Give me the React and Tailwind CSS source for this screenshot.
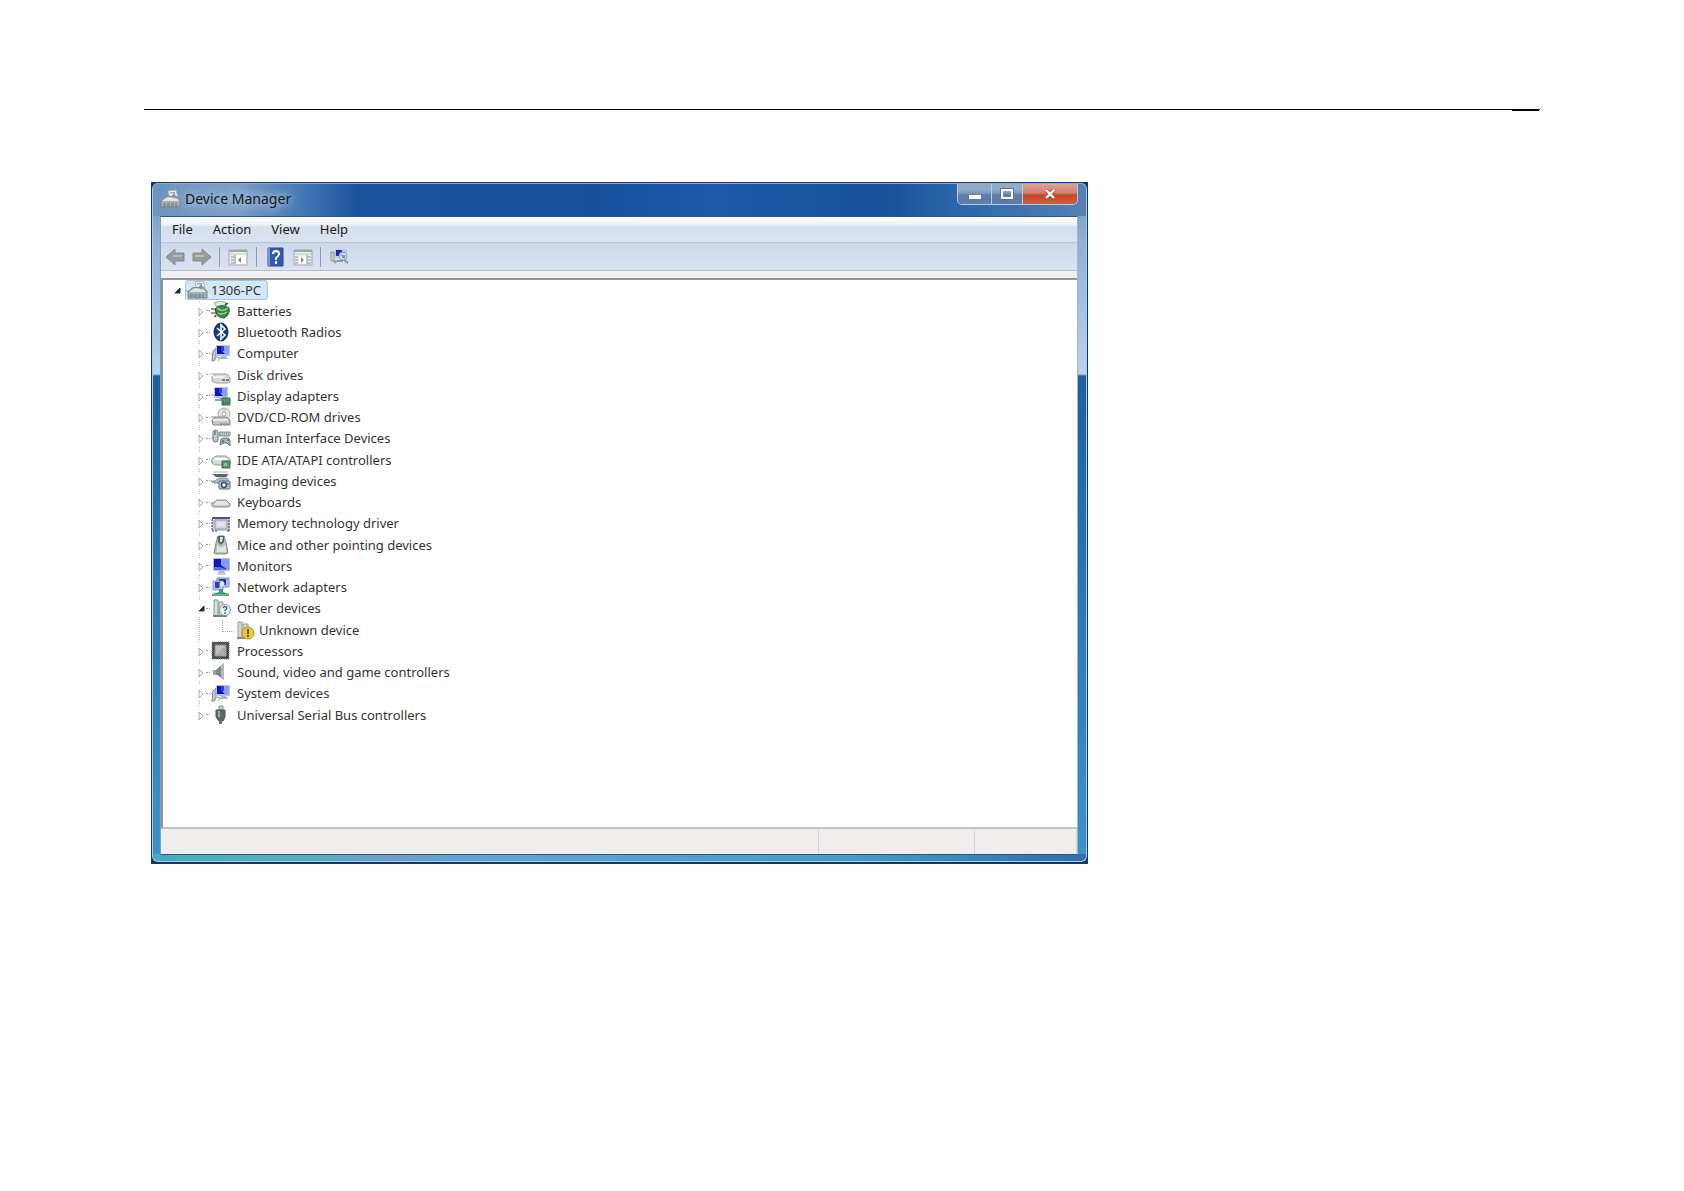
import React from "react";

function PcIcon() {
  return (
    <svg viewBox="0 0 22 20" className="h-5 w-[22px] shrink-0" aria-hidden="true">
      <path d="M9 2l8-1 2 7-8 2z" fill="#e9efef" stroke="#a9b6bb" />
      <path d="M11 4l5-.6M15 3l1 5" stroke="#8b989c" />
      <path d="M0 11h4" stroke="#7d8a90" />
      <path d="M6 8l11-1 4 4v7H2v-6z" fill="#a5b0b3" stroke="#78858a" />
      <path d="M6 10l3-2 9 2 2 2H3z" fill="#dfe7e7" />
      <path d="M12 8l3-4 2 5" fill="#7e9a94" />
      <path d="M4 15h14M4 17h14" stroke="#66747a" strokeDasharray="3 1" />
    </svg>
  );
}

function Monitor({ x = 5, y = 2 }) {
  return (
    <g transform={`translate(${x} ${y})`}>
      <path d="M0 0h14v11H0z" fill="#b4c3ee" />
      <path d="M1 1h10v8H1z" fill="#1016b8" />
      <path d="M6 1h7v8l-3 1-4-4z" fill="#8ba0f2" />
      <path d="M5 1h3v5H5z" fill="#2c3fd2" />
      <path d="M5 11h5l2 3H4z" fill="#aab4bd" />
    </g>
  );
}

function ComputerArt() {
  return (
    <>
      <path d="M0 11h4" stroke="#8d979c" />
      <path d="M2 8l3-3v10l-2 3H1z" fill="#c3cbcb" stroke="#7d8988" />
      <Monitor />
      <path d="M6 14l3 1-2 3" fill="none" stroke="#8e9aa6" />
    </>
  );
}

const ART = {
  battery: (
    <>
      <path d="M0 8h6M0 12h6" stroke="#6f7f75" strokeWidth="1.4" />
      <path d="M3 2l7-2 5 2v6l-6 1z" fill="#e7ede5" stroke="#8da08d" />
      <path d="M4 8c2-3 6-4 10-3l4 2c1 4-1 8-5 10-5 0-8-3-9-9z" fill="#3d8648" stroke="#235d31" />
      <path d="M6 7c3 3 7 3 11 0M7 12c3 2 6 1 9-1" fill="none" stroke="#9fd0a0" strokeWidth="1.4" />
      <path d="M14 4l3-2M5 14l-1 2" stroke="#376b40" strokeWidth="2" />
    </>
  ),
  bluetooth: (
    <>
      <ellipse cx="10" cy="10" rx="7" ry="9" fill="#123e7c" stroke="#0b2d5e" />
      <path d="M6 6l8 7-4 4V3l4 4-8 7" fill="none" stroke="#fff" strokeWidth="1.6" />
    </>
  ),
  computer: <ComputerArt />,
  disk: (
    <>
      <path d="M0 9h6" stroke="#a2a7a8" />
      <path d="M1 12l4-3h11l3 4v4l-2 1H5l-4-2z" fill="#d9dbdb" stroke="#9da1a2" />
      <path d="M2 12h12" stroke="#fafafa" strokeWidth="1.5" />
      <path d="M11 15h7" stroke="#77807a" strokeWidth="2" strokeDasharray="3 1" />
    </>
  ),
  display: (
    <>
      <path d="M0 9h5" stroke="#8d979c" />
      <Monitor x={3} y={1} />
      <path d="M4 14h15" stroke="#98a6b4" strokeWidth="2" />
      <path d="M11 12h8v7h-8z" fill="#5b9169" stroke="#3c6d5a" />
      <path d="M12 17h6" stroke="#31415b" strokeDasharray="1 1" />
    </>
  ),
  dvd: (
    <>
      <circle cx="13" cy="7" r="6" fill="#e5e6df" stroke="#aaaea9" />
      <circle cx="13" cy="7" r="2" fill="#fff" stroke="#a5aaa5" />
      <path d="M12 1l1 5 2-5z" fill="#c0c996" />
      <path d="M0 10h5" stroke="#8b8e8e" />
      <path d="M1 13l4-3h10l4 3v5H2z" fill="#c5c7c7" stroke="#818485" />
      <path d="M2 13h15" stroke="#f4f4f4" strokeWidth="1.5" />
      <path d="M9 17h8" stroke="#5c6261" strokeDasharray="2 1" />
    </>
  ),
  hid: (
    <>
      <path d="M0 10h3" stroke="#889195" />
      <rect x="2" y="2" width="5" height="12" rx="2.5" fill="#c1cccc" stroke="#6c777b" />
      <path d="M4 3v4" stroke="#515d61" />
      <path d="M8 4h11v4H8z" fill="#c5cdd1" stroke="#8b969b" />
      <path d="M9 5h9M9 7h9" stroke="#707b80" strokeDasharray="1 1" />
      <path d="M9 17l1-6 3-1h4l2 2v6l-3-3h-3z" fill="#abb6ba" stroke="#6c777d" />
      <path d="M12 12v3M16 12h2" stroke="#435158" />
    </>
  ),
  ide: (
    <>
      <path d="M0 11h3" stroke="#93999b" />
      <path d="M1 9l4-3h10l4 3v5l-2 1H4l-3-2z" fill="#d7dbd9" stroke="#8d9594" />
      <path d="M3 9h13" stroke="#fafafa" strokeWidth="2" />
      <path d="M11 11h8v7h-8z" fill="#5d9275" stroke="#3b6953" />
      <path d="M13 13h3v3h-3z" fill="#8abf9b" />
    </>
  ),
  imaging: (
    <>
      <path d="M1 3h17l-3 3H5z" fill="#5c666c" />
      <path d="M2 1h15" stroke="#aab2b6" />
      <path d="M0 10h4l4-3h8l2 3v2H3z" fill="#b7bec3" stroke="#848e95" />
      <rect x="8" y="10" width="11" height="8" rx="1" fill="#b8c3dc" stroke="#5e6989" />
      <circle cx="13" cy="14" r="2.5" fill="#fff" stroke="#3c486d" strokeWidth="1.5" />
      <path d="M17 12v2" stroke="#3c486d" />
    </>
  ),
  keyboard: (
    <>
      <path d="M0 11h3" stroke="#8b8f91" />
      <path d="M1 12l5-4h9l4 4v2l-2 1H3l-2-1z" fill="#c9cbcc" stroke="#85898a" />
      <path d="M5 10h11M4 12h13" stroke="#efefef" strokeWidth="1.4" />
    </>
  ),
  memory: (
    <>
      <path d="M1 5h18v13H1z" fill="#c3c9d3" />
      <path d="M1 5h18" stroke="#4c5668" strokeWidth="2" />
      <path d="M4 7h12v9H4z" fill="#d1d6df" stroke="#929dac" />
      <path d="M1 6v12M18 7v11M1 18h5M16 18h3" stroke="#3e4656" strokeDasharray="2 1" />
      <path d="M6 9h8v4H6z" fill="#e2e6eb" />
    </>
  ),
  mouse: (
    <>
      <path d="M7 1h6l2 7 2 10-3 1H6l-3-1 2-10z" fill="#bcc2c1" stroke="#7e8585" />
      <path d="M7 1h6v6l-3 3-3-3z" fill="#59615f" />
      <path d="M9 2h3l-1 5H9z" fill="#e0e5e4" />
      <path d="M6 10l4 3 5-3v7H6z" fill="#e3e7e5" />
    </>
  ),
  monitor: (
    <>
      <path d="M2 2h17v13H2z" fill="#aebcf0" />
      <path d="M3 3h13v10H3z" fill="#1318b8" />
      <path d="M10 3h8v11l-4-2-4-3z" fill="#8499f0" />
      <path d="M3 11l6 0 6 2v1H3z" fill="#5970e4" />
      <path d="M8 15h5l2 4H6z" fill="#b8bcc0" />
      <path d="M6 18h9" stroke="#dcdcdc" />
    </>
  ),
  network: (
    <>
      <path d="M6 1h12v9H6z" fill="#a9bce8" stroke="#8094c6" />
      <path d="M8 2h7v6H8z" fill="#1c2fae" />
      <path d="M2 4h10v9H2z" fill="#b7c8ed" stroke="#7c91c6" />
      <path d="M4 5h6l-2 6H4z" fill="#2641b9" />
      <circle cx="11" cy="7" r="2.5" fill="#dce8fa" />
      <path d="M8 12h4v3l6 2v2H1v-2l7-2z" fill="#3d9b78" />
      <path d="M2 18h15" stroke="#85c9a9" />
    </>
  ),
  other: (
    <>
      <path d="M3 2h4v16H3zM8 4h4v14H8z" fill="#d6dfd6" stroke="#8d9990" />
      <path d="M2 18h14" stroke="#74857a" strokeWidth="2" />
      <circle cx="14" cy="12" r="5.5" fill="#edf2f6" stroke="#8495a7" />
      <path d="M12 10q2-3 4 0q0 1-2 2v1M14 14v2" fill="none" stroke="#3b5a87" strokeWidth="1.3" />
    </>
  ),
  unknown: (
    <>
      <path d="M2 2h4v16H2zM7 4h5v14H7z" fill="#d6dbc9" stroke="#979d8c" />
      <path d="M1 18h8" stroke="#8a8f6e" strokeWidth="2" />
      <circle cx="12" cy="13" r="6" fill="#e9cb3a" stroke="#b8951f" />
      <path d="M12 9v5M12 15v2" stroke="#5d4a0c" strokeWidth="1.8" />
    </>
  ),
  cpu: (
    <>
      <path d="M1 1h17v17H1z" fill="#4a4d50" />
      <path d="M1 1h17v17H1z" fill="none" stroke="#777" strokeDasharray="1 1" />
      <path d="M4 4h11v11H4z" fill="#c0c2c1" stroke="#8b8d8d" />
      <path d="M5 14L14 5v9z" fill="#aaadac" />
    </>
  ),
  sound: (
    <>
      <path d="M2 8h4v5H2z" fill="#9a9fa3" />
      <path d="M5 8l8-7v17l-8-6z" fill="#80878c" />
      <path d="M10 4l3-3v17l-3-3z" fill="#b2b8bc" />
    </>
  ),
  usb: (
    <>
      <path d="M8 1h4v4H8z" fill="#c8cccd" stroke="#8d9394" />
      <path d="M5 5h9v7l-2 4H8l-3-4z" fill="#626869" stroke="#4d5354" />
      <path d="M7 6h2v6H7z" fill="#a1a6a6" />
      <path d="M8 15h3v4H8z" fill="#6b7172" />
    </>
  ),
};

function DeviceIcon({ kind }) {
  return (
    <svg viewBox="0 0 20 20" fill="none" className="size-5 shrink-0" aria-hidden="true">
      {ART[kind]}
    </svg>
  );
}

function Toggle({ open, label }) {
  return (
    <button type="button" aria-label={label} className="relative flex h-4 w-2 shrink-0 items-center bg-white">
      <svg viewBox="0 0 8 10" className="h-2.5 w-2" aria-hidden="true">
        {open ? (
          <path d="M7 3v5H2z" fill="#2d2d2d" stroke="#2d2d2d" />
        ) : (
          <path d="M2 2l4 4-4 4z" fill="#fff" stroke="#a9a9a9" />
        )}
      </svg>
    </button>
  );
}

const DEVICES = [
  ["battery", "Batteries"],
  ["bluetooth", "Bluetooth Radios"],
  ["computer", "Computer"],
  ["disk", "Disk drives"],
  ["display", "Display adapters"],
  ["dvd", "DVD/CD-ROM drives"],
  ["hid", "Human Interface Devices"],
  ["ide", "IDE ATA/ATAPI controllers"],
  ["imaging", "Imaging devices"],
  ["keyboard", "Keyboards"],
  ["memory", "Memory technology driver"],
  ["mouse", "Mice and other pointing devices"],
  ["monitor", "Monitors"],
  ["network", "Network adapters"],
  ["other", "Other devices", true],
  ["unknown", "Unknown device", false, true],
  ["cpu", "Processors"],
  ["sound", "Sound, video and game controllers"],
  ["computer", "System devices"],
  ["usb", "Universal Serial Bus controllers"],
];

function DeviceRow({ kind, label, open, child }) {
  if (child) {
    return (
      <li className="flex h-[21px] items-center pb-[2px] pl-[59px]">
        <span className="h-3 w-3 self-start border-b border-l border-dotted border-[#a5a5a5]" />
        <span className="ml-[2px] flex items-center gap-[3px]">
          <DeviceIcon kind={kind} />
          {label}
        </span>
      </li>
    );
  }
  return (
    <li className="flex h-[21px] items-center pb-[2px] pl-[34px]">
      <Toggle open={open} label={`Toggle ${label}`} />
      <span className="mx-px w-1 border-t border-dotted border-[#9a9a9a]" />
      <DeviceIcon kind={kind} />
      <span className="ml-[6px]">{label}</span>
    </li>
  );
}

function PanelIcon({ flip }) {
  return (
    <svg viewBox="0 0 20 18" className="h-[18px] w-5" aria-hidden="true">
      <path d="M1 2h18v15H1z" fill="#eceeed" stroke="#a3aaae" />
      <path d="M1 3h18" stroke="#9ba5aa" strokeWidth="2" />
      <path d="M2 6h16" stroke="#c6cccc" />
      {flip ? (
        <>
          <path d="M14 7v9M2 9h3M2 12h3M2 15h3M15 9h3M15 12h3M15 15h3" stroke="#8b9499" />
          <path d="M6 8h7v8H6z" fill="#fff" />
          <path d="M8 9l3 3-3 3z" fill="#86906f" />
        </>
      ) : (
        <>
          <path d="M7 7v9M3 9h3M3 12h3M3 15h3" stroke="#8b9499" />
          <path d="M8 7h10v9H8z" fill="#fff" />
          <path d="M13 9l-3 3 3 3z" fill="#7e8872" />
        </>
      )}
    </svg>
  );
}

function ArrowIcon({ right }) {
  return (
    <svg viewBox="0 0 20 18" className="h-[18px] w-5" aria-hidden="true">
      {right ? (
        <path d="M19 9l-9-8v4H1v8h9v4z" fill="#989b9f" stroke="#85898f" />
      ) : (
        <path d="M1 9l9-8v4h9v8h-9v4z" fill="#989b9f" stroke="#85898f" />
      )}
      <path d={right ? "M3 8h9" : "M8 8h9"} stroke="#b9bcbf" strokeWidth="2" />
    </svg>
  );
}

function Separator() {
  return <span className="h-5 w-px bg-[#8e98a8]" />;
}

function Toolbar() {
  return (
    <div className="flex h-7 items-center border-b border-[#b9c1cf] bg-linear-to-b from-[#cfd8ea] to-[#dbe2f1] pl-1">
      <div className="flex gap-[7px]">
        <button type="button" aria-label="Back"><ArrowIcon /></button>
        <button type="button" aria-label="Forward"><ArrowIcon right /></button>
      </div>
      <div className="ml-[7px] flex items-center gap-2">
        <Separator />
        <button type="button" aria-label="Show console tree"><PanelIcon /></button>
        <Separator />
      </div>
      <div className="ml-[10px] flex items-center gap-[9px]">
        <button type="button" aria-label="Help">
          <svg viewBox="0 0 17 20" className="h-5 w-[17px]" aria-hidden="true">
            <path d="M1 1h15v18H1z" fill="#3458b8" stroke="#2b4794" />
            <path d="M2 1v18" stroke="#7893da" strokeWidth="2" />
            <path d="M6 7q0-3 3-3t3 3q0 2-3 4v2M9 14v3" fill="none" stroke="#fff" strokeWidth="2" />
          </svg>
        </button>
        <button type="button" aria-label="Show action pane"><PanelIcon flip /></button>
      </div>
      <div className="ml-[7px] flex items-center gap-2">
        <Separator />
        <button type="button" aria-label="Scan for hardware changes">
          <svg viewBox="0 0 20 20" fill="none" className="size-5" aria-hidden="true">
            <path d="M2 5h3v9H2z" fill="#c9d0cc" stroke="#8f989c" />
            <path d="M6 2h12v9H6z" fill="#b9c6ea" />
            <path d="M7 3h6v6H7z" fill="#2226a8" />
            <circle cx="14" cy="9" r="4" fill="#d4def3" fillOpacity=".85" stroke="#8f9cbb" />
            <path d="M13 8h3v3h-3z" fill="#7b86c8" />
            <path d="M15 13l4 3" stroke="#8a8f99" strokeWidth="2" />
            <path d="M4 13l5 1-3 3z" fill="#a3a26f" />
            <path d="M8 14h6" stroke="#8c98a8" strokeWidth="2" />
          </svg>
        </button>
      </div>
    </div>
  );
}

function TitleBar() {
  return (
    <header className="flex h-[33px] items-start justify-between rounded-t-md border-t border-[#8fb0d6] bg-[linear-gradient(90deg,#6d93be_0%,#7d9fc6_9%,#4377b4_16%,#1c529c_22%,#174f9b_48%,#1c5ba8_60%,#184f98_78%,#2a66a9_86%,#5580b4_100%)] pl-[6px]">
      <div className="flex h-full items-center gap-1 pb-[2px]">
        <PcIcon />
        <h1 className="text-[14px] leading-5 text-[#101820] [text-shadow:0_0_8px_#c7daee,0_0_12px_#b3cbe5]">Device Manager</h1>
      </div>
      <div className="mr-2 flex h-[21px] overflow-hidden rounded-b-[5px] border border-t-0 border-[#bccbe0]">
        <button type="button" aria-label="Minimize" className="flex w-[34px] items-center justify-center border-r border-[#bccbe0] bg-linear-to-b from-[#92a9c8] from-30% via-[#7c98bf] via-45% to-[#5c7dab] to-55%">
          <span className="mt-[6px] h-[4px] w-3 bg-white" />
        </button>
        <button type="button" aria-label="Maximize" className="flex w-[31px] items-center justify-center border-r border-[#bccbe0] bg-linear-to-b from-[#92a9c8] from-30% via-[#7c98bf] via-45% to-[#5c7dab] to-55%">
          <span className="h-[10px] w-3 border-2 border-white outline outline-[#65738c]" />
        </button>
        <button type="button" aria-label="Close" className="flex w-[54px] items-center justify-center bg-[linear-gradient(180deg,#e0a193_0%,#d47f69_45%,#c2482a_55%,#cf5e3c_100%)]">
          <svg viewBox="0 0 12 10" className="h-2.5 w-3" aria-hidden="true">
            <path d="M2 1l8 8M10 1L2 9" stroke="#96514a" strokeWidth="4" />
            <path d="M2 1l8 8M10 1L2 9" stroke="#fff" strokeWidth="2.4" />
          </svg>
        </button>
      </div>
    </header>
  );
}

function DeviceManager() {
  return (
    <section
      aria-label="Device Manager"
      className="bg-[#14375f] p-px pb-[2px] text-[13px] leading-5 text-[#333]"
    >
      <div className="rounded-md border border-t-0 border-[#a9cfe6] bg-[linear-gradient(90deg,#4aa9c0_0%,#52b0bf_14%,#6d9dcc_25%,#5fa3cf_40%,#4a9ac4_75%,#2f6fab_100%),linear-gradient(180deg,#6d93be_0,#8fb1d6_60px,#b9d2ee_191px,#1d5f9f_193px,#2a73b0_380px,#3c93c6_100%)] bg-[size:100%_7px,100%_100%] bg-bottom bg-no-repeat">
        <TitleBar />
        <div className="mr-2 mb-[6px] ml-[7px] border border-[#2c5580] border-r-[#9fb9d2] border-l-[#7f9dbd] bg-[#f0f0f0]">
          <nav aria-label="Menu bar" className="flex h-[26px] items-center gap-5 border-b border-[#bcc5d6] bg-[linear-gradient(180deg,#fff_0,#edf1f8_8px,#d6deed_10px,#dbe2f0_100%)] pb-[2px] pl-[11px] text-[#1c1c1c]">
            <button type="button">File</button>
            <button type="button">Action</button>
            <button type="button">View</button>
            <button type="button">Help</button>
          </nav>
          <Toolbar />
          <div className="mt-[7px] border-t-2 border-b-2 border-l-2 border-t-[#929292] border-b-[#c3c3c3] border-l-[#8b9299] bg-white pb-[101px]">
            <ul className="relative flex min-h-[446px] flex-col justify-between">
              <li className="flex h-[21px] items-center pb-[2px] pl-[10px]">
                <Toggle open label="Toggle 1306-PC" />
                <span className="ml-[4px] flex h-5 items-center gap-[3px] rounded-[3px] border border-[#a5c5e2] bg-[#d5e6f7] pr-[6px]">
                  <PcIcon />
                  1306-PC
                </span>
              </li>
              <li aria-hidden="true" className="absolute top-[21px] bottom-3 left-[36px] border-l border-dotted border-[#b5b5b5]" />
              {DEVICES.map(([kind, label, open, child]) => (
                <DeviceRow key={label} kind={kind} label={label} open={open} child={child} />
              ))}
            </ul>
          </div>
          <footer className="grid h-[25px] grid-cols-[657fr_156fr_102fr] bg-[#efeeed]">
            <span className="border-r border-[#d5d5d5]" />
            <span className="border-r border-[#d5d5d5]" />
            <span className="border-r border-[#d5d5d5]" />
          </footer>
        </div>
      </div>
    </section>
  );
}

export default function App() {
  return (
    <main className="min-h-screen bg-white px-36 pt-[109px] pb-16 font-['Noto_Sans','Open_Sans',sans-serif]">
      <div className="flex h-[2px] justify-end border-t border-black pr-px">
        <span className="w-[27px] bg-black" />
      </div>
      <div className="mt-[71px] grid grid-cols-[937fr_452fr] pl-[7px]">
        <DeviceManager />
      </div>
    </main>
  );
}
